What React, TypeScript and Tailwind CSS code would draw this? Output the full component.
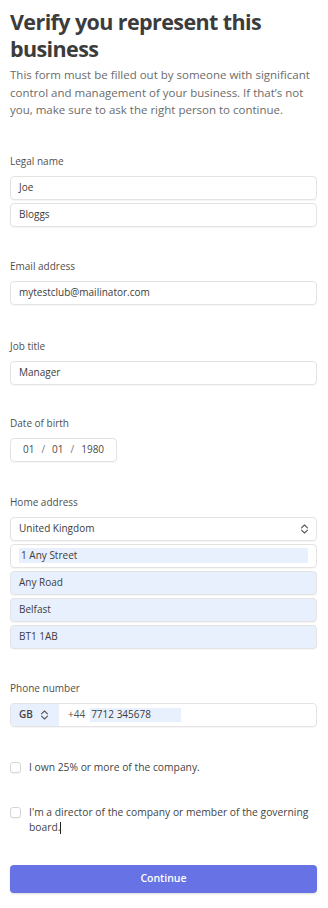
import React from "react";

const font = { fontFamily: '"Open Sans", "Noto Sans", sans-serif' };

function Label({ children }: { children: React.ReactNode }) {
  return <div className="text-[10px] leading-[14px] text-[#4f4f4f] mb-[8px]">{children}</div>;
}

function Field({ children, className = "" }: { children: React.ReactNode; className?: string }) {
  return (
    <div
      className={
        "h-[24px] rounded-[4px] border border-[#e3e3e3] shadow-[0_1px_1px_rgba(0,0,0,0.04)] flex items-center px-[8px] text-[10px] text-[#3c3c3c] " +
        className
      }
    >
      {children}
    </div>
  );
}

function Chevrons() {
  return (
    <svg width="9" height="10" viewBox="0 0 9 10" fill="none" stroke="#555" strokeWidth="1.1" strokeLinecap="round" strokeLinejoin="round">
      <path d="M1.5 3.8 L4.5 1 L7.5 3.8" />
      <path d="M1.5 6.2 L4.5 9 L7.5 6.2" />
    </svg>
  );
}

function Checkbox() {
  return <div className="w-[11px] h-[11px] rounded-[3px] border border-[#d6d6d6] bg-white shadow-[0_1px_1px_rgba(0,0,0,0.05)] shrink-0" />;
}

export default function App() {
  return (
    <div className="w-[328px] h-[908px] bg-white overflow-hidden" style={font}>
      <div className="ml-[10px] w-[307px] pt-[8px]">
        <h1 className="text-[21.5px] leading-[27px] font-bold text-[#3c3c3c] tracking-[-0.6px]">
          Verify you represent this business
        </h1>
        <p className="mt-[4px] text-[11.5px] leading-[17.5px] text-[#6b6b6b]">
          This form must be filled out by someone with significant control and management of your business. If that’s not you, make sure to ask the right person to continue.
        </p>

        <div className="mt-[35px]">
          <Label>Legal name</Label>
          <div className="flex flex-col gap-[3px]">
            <Field>Joe</Field>
            <Field>Bloggs</Field>
          </div>
        </div>

        <div className="mt-[32px]">
          <Label>Email address</Label>
          <Field>mytestclub@mailinator.com</Field>
        </div>

        <div className="mt-[34px]">
          <Label>Job title</Label>
          <Field>Manager</Field>
        </div>

        <div className="mt-[31px]">
          <Label>Date of birth</Label>
          <Field className="w-[107px] px-[12px] gap-[7px] text-[#4a4a4a]">
            <span>01</span>
            <span className="text-[#777]">/</span>
            <span>01</span>
            <span className="text-[#777]">/</span>
            <span>1980</span>
          </Field>
        </div>

        <div className="mt-[33px]">
          <Label>Home address</Label>
          <div className="flex flex-col gap-[3px]">
            <Field className="justify-between pr-[7px]">
              <span>United Kingdom</span>
              <Chevrons />
            </Field>
            <Field className="px-[6px]">
              <span className="bg-[#e8f0fe] w-full h-[15px] flex items-center px-[2px]">1 Any Street</span>
            </Field>
            <Field className="bg-[#e8f0fe] border-[#dfe5ef]">Any Road</Field>
            <Field className="bg-[#e8f0fe] border-[#dfe5ef]">Belfast</Field>
            <Field className="bg-[#e8f0fe] border-[#dfe5ef]">BT1 1AB</Field>
          </div>
        </div>

        <div className="mt-[32px]">
          <Label>Phone number</Label>
          <div className="h-[24px] rounded-[4px] border border-[#e3e3e3] shadow-[0_1px_1px_rgba(0,0,0,0.04)] flex items-center text-[10px] text-[#3c3c3c] overflow-hidden">
            <div className="h-full w-[48px] bg-[#e8f0fe] flex items-center pl-[8px] gap-[7px] font-semibold text-[#444]">
              <span>GB</span>
              <Chevrons />
            </div>
            <span className="ml-[9px] text-[#555]">+44</span>
            <span className="ml-[5px] bg-[#e8f0fe] w-[91px] h-[14px] flex items-center px-[1px]">7712 345678</span>
          </div>
        </div>

        <div className="mt-[33px] flex items-center gap-[8px]">
          <Checkbox />
          <span className="text-[10.3px] leading-[15px] text-[#444]">I own 25% or more of the company.</span>
        </div>

        <div className="mt-[30px] flex items-start gap-[8px]">
          <div className="mt-[2px]"><Checkbox /></div>
          <span className="text-[10.3px] leading-[15px] text-[#444]">
            I'm a director of the company or member of the governing board.<span className="inline-block w-[1px] h-[12px] bg-[#222] align-middle" />
          </span>
        </div>

        <button className="mt-[30px] w-full h-[28px] rounded-[4px] bg-[#6772e5] text-white text-[10.5px] font-semibold shadow-[0_1px_2px_rgba(0,0,0,0.15)]">
          Continue
        </button>
      </div>
    </div>
  );
}
